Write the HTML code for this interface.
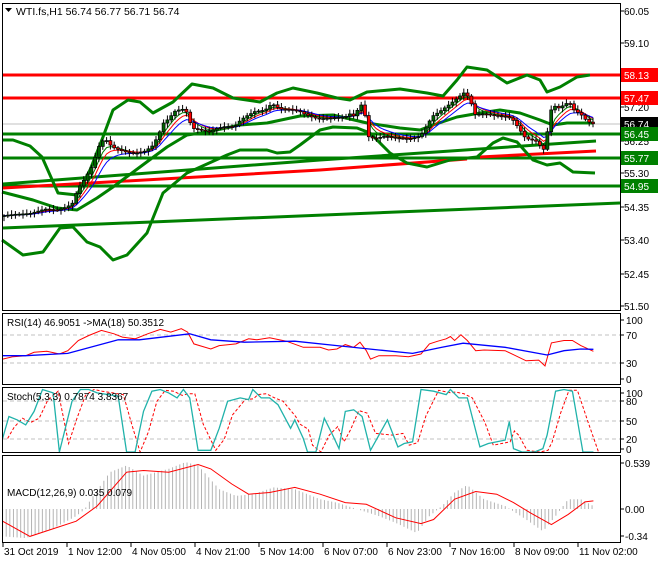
<!DOCTYPE html>
<html><head><meta charset="utf-8">
<style>
html,body{margin:0;padding:0;background:#fff;}
body{width:660px;height:560px;overflow:hidden;font-family:"Liberation Sans",sans-serif;}
svg text{font-family:"Liberation Sans",sans-serif;font-size:10px;fill:#000;}
</style></head><body>
<svg id="s" width="660" height="560" viewBox="0 0 660 560" xmlns="http://www.w3.org/2000/svg">
<rect x="0" y="0" width="660" height="560" fill="#fff"/>
<g id="main"></g>
<g id="ind"></g>
<g fill="none" stroke="#000" stroke-width="1">
<rect x="2.5" y="3.5" width="618" height="307"/>
<rect x="2.5" y="313.5" width="618" height="71"/>
<rect x="2.5" y="387.5" width="618" height="65"/>
<rect x="2.5" y="455.5" width="618" height="87"/>
</g>
<polygon points="5,8 12,8 8.5,12" fill="#000"/>
<text x="16" y="15" style="font-size:10.5px">WTI.fs,H1  56.74 56.77 56.71 56.74</text>
<text x="7" y="326">RSI(14) 46.9051  -&gt;MA(18) 50.3512</text>
<text x="7" y="400">Stoch(5,3,3) 0.7874 3.8367</text>
<text x="7" y="496">MACD(12,26,9) 0.035 0.079</text>
<g id="axis"></g>
</svg>
<script>
(function(){
var NS="http://www.w3.org/2000/svg";
function el(p,t,a,txt){var e=document.createElementNS(NS,t);for(var k in a)e.setAttribute(k,a[k]);if(txt!=null)e.textContent=txt;document.getElementById(p).appendChild(e);return e;}
function pl(p,pts,col,w,extra){var a={points:pts.map(function(q){return q[0]+","+q[1]}).join(" "),fill:"none",stroke:col,"stroke-width":w};for(var k in extra)a[k]=extra[k];return el(p,"polyline",a);}
var ax=[["60.05",11],["59.10",43],["57.20",107],["56.25",141],["55.30",173],["54.35",207],["53.40",240],["52.45",274],["51.50",306]];
ax.forEach(function(a){el("axis","line",{x1:620,y1:a[1],x2:624,y2:a[1],stroke:"#000"});el("axis","text",{x:624,y:a[1]+4},a[0]);});
var boxes=[["58.13",75,"#ff0000","#fff"],["57.47",98,"#ff0000","#fff"],["56.74",124,"#000","#fff"],["56.45",134,"#008000","#fff"],["55.77",158,"#008000","#fff"],["54.95",186,"#008000","#fff"]];
pl("main",[[3,124],[620,124]],"#c0c0c0",1);
pl("main",[[3,75],[620,75]],"#ff0000",3);
pl("main",[[3,98],[620,98]],"#ff0000",3);
pl("main",[[3,134],[620,134]],"#008000",3);
pl("main",[[3,158],[620,158]],"#008000",3);
pl("main",[[3,186],[620,186]],"#008000",3);
pl("main",[[3,228],[620,203]],"#008000",3);
pl("main",[[3,184],[320,160],[596,141]],"#008000",3);
pl("main",[[3,188],[320,170],[467,159]],"#ff0000",3);
pl("main",[[480,157],[596,151]],"#ff0000",3);
pl("main",[[2,140],[13,140],[30,146],[42,157],[50,175],[58,193],[77,195],[90,170],[103,137],[113,110],[128,100],[140,102],[153,113],[173,102],[192,84],[213,88],[233,98],[260,102],[277,93],[293,88],[317,93],[337,98],[350,100],[367,92],[400,89],[427,93],[443,96],[457,80],[467,67],[487,70],[507,83],[527,75],[540,80],[547,92],[560,87],[577,77],[590,75]],"#008000",3,{"stroke-linejoin":"round"});
pl("main",[[2,192],[33,200],[57,208],[77,210],[97,198],[113,187],[140,167],[167,147],[187,135],[207,132],[240,125],[267,123],[300,116],[333,115],[367,123],[400,128],[420,130],[433,125],[457,117],[480,113],[500,110],[520,113],[540,120],[553,125],[567,123],[593,123]],"#008000",3,{"stroke-linejoin":"round"});
pl("main",[[2,240],[23,255],[43,252],[60,228],[73,227],[87,242],[100,247],[113,260],[127,255],[147,233],[163,193],[187,173],[227,155],[240,150],[267,150],[277,153],[290,152],[300,145],[320,130],[333,127],[357,128],[370,133],[390,153],[407,163],[427,167],[450,160],[477,157],[493,143],[503,138],[517,142],[533,160],[547,165],[560,163],[573,172],[595,173]],"#008000",3,{"stroke-linejoin":"round"});
var kp=[[3,215],[15,213],[30,212],[45,208],[57,210],[65,208],[72,205],[78,190],[85,180],[92,168],[100,145],[105,140],[112,148],[118,150],[125,152],[135,153],[145,150],[152,145],[158,135],[163,122],[168,118],[175,110],[182,108],[187,112],[192,128],[200,130],[210,133],[215,130],[225,128],[235,128],[240,122],[245,118],[250,115],[255,112],[265,110],[272,103],[280,108],[290,108],[300,110],[305,113],[315,117],[320,118],[335,118],[345,118],[350,115],[355,118],[360,105],[364,110],[368,138],[375,140],[385,137],[395,138],[410,138],[420,135],[425,128],[432,115],[440,110],[450,103],[458,97],[465,92],[470,100],[475,115],[485,115],[495,117],[505,118],[512,120],[518,128],[525,138],[530,140],[535,140],[540,145],[545,150],[550,110],[555,105],[560,107],[565,102],[570,102],[575,110],[580,112],[585,118],[590,122],[595,124]];
function interp(x){for(var i=1;i<kp.length;i++){if(x<=kp[i][0]){var a=kp[i-1],b=kp[i];return a[1]+(b[1]-a[1])*(x-a[0])/(b[0]-a[0]);}}return kp[kp.length-1][1];}
var xs=[],cl=[];for(var x=4;x<=594;x+=3.8){xs.push(x);cl.push(interp(x)+Math.sin(x*1.7)*1.5);}
function ema(arr,n){var k=2/(n+1),o=[arr[0]];for(var i=1;i<arr.length;i++)o.push(o[i-1]+k*(arr[i]-o[i-1]));return o;}
var e1=ema(cl,4),e2=ema(cl,6),e3=ema(cl,9);
pl("main",xs.map(function(x,i){return[x,e1[i]]}),"#008000",1);
pl("main",xs.map(function(x,i){return[x,e2[i]]}),"#ff0000",1);
pl("main",xs.map(function(x,i){return[x,e3[i]]}),"#0000ff",1);
for(var i=0;i<xs.length;i++){var o=i?cl[i-1]:cl[0]+1,c=cl[i],cx=xs[i];var tp=Math.min(o,c),bt=Math.max(o,c);
var hw=1.5+Math.abs(Math.sin(i*2.3))*3,lw=1.5+Math.abs(Math.cos(i*1.9))*3;
el("main","line",{x1:cx,y1:tp-hw,x2:cx,y2:bt+lw,stroke:"#000","stroke-width":1});
var h=Math.max(1,bt-tp);el("main","rect",{x:cx-1.5,y:tp,width:3,height:h,fill:c<o?"#006400":"#ff0000",stroke:"#000","stroke-width":0.7});}
boxes.forEach(function(b){el("axis","rect",{x:621,y:b[1]-7,width:37,height:14,fill:b[2]});el("axis","text",{x:624,y:b[1]+4,style:"fill:"+b[3]},b[0]);});
function cv(a){return a.map(function(p){return[(p[0]*0.4205+0.5).toFixed(1),(300+p[1]*0.3377).toFixed(1)]});}
pl("ind",[[3,335],[620,335]],"#c0c0c0",1,{"stroke-dasharray":"4,3"});
pl("ind",[[3,363],[620,363]],"#c0c0c0",1,{"stroke-dasharray":"4,3"});
pl("ind",cv([[5,175],[30,168],[60,165],[80,155],[110,152],[140,160],[160,150],[185,120],[210,105],[240,90],[270,100],[290,110],[320,115],[350,100],[380,87],[405,95],[430,85],[445,95],[460,130],[500,145],[520,135],[560,130],[590,115],[610,118],[640,112],[680,122],[720,140],[760,140],[780,148],[800,145],[820,132],[840,140],[855,125],[870,150],[880,175],[900,165],[940,165],[970,168],[1000,160],[1020,130],[1040,122],[1060,115],[1070,108],[1080,120],[1095,103],[1110,120],[1130,150],[1150,148],[1200,150],[1220,162],[1250,180],[1280,178],[1295,195],[1310,127],[1340,120],[1360,120],[1380,135],[1410,152]]),"#ff0000",1);
pl("ind",cv([[5,165],[60,165],[160,158],[280,118],[330,118],[450,100],[500,118],[580,125],[700,122],[800,135],[900,148],[980,158],[1050,140],[1100,128],[1200,140],[1300,163],[1340,150],[1380,145],[1410,146]]),"#0000ff",1.3);
[["100",320],["70",335],["30",363],["0",379]].forEach(function(a){el("ind","line",{x1:620,y1:a[1],x2:624,y2:a[1],stroke:"#000"});el("ind","text",{x:626,y:a[1]+4},a[0]);});
[401,421,439].forEach(function(y){pl("ind",[[3,y],[620,y]],"#c0c0c0",1,{"stroke-dasharray":"4,3"});});
var st=[[5,410],[20,345],[40,355],[60,370],[80,330],[100,265],[125,275],[140,450],[150,400],[170,300],[190,265],[210,265],[230,275],[280,285],[300,450],[320,450],[340,330],[360,270],[380,265],[400,275],[420,290],[435,265],[450,290],[470,445],[500,445],[520,380],[540,300],[570,290],[590,295],[600,265],[620,290],[640,290],[660,310],[690,380],[700,355],[720,410],[730,450],[750,450],[770,350],[790,400],[805,440],[820,330],[840,325],[860,345],[880,445],[920,355],[945,435],[960,425],[980,420],[1000,265],[1030,270],[1060,280],[1070,265],[1090,290],[1110,290],[1140,435],[1160,425],[1200,415],[1210,360],[1220,440],[1240,450],[1270,450],[1290,440],[1300,400],[1320,270],[1340,265],[1360,270],[1385,450],[1410,450]];
var sg=[];for(var j=0;j<st.length;j++){var yy=(st[j][1]+(j?st[j-1][1]:st[j][1]))/2;sg.push([st[j][0]+12,yy]);}
pl("ind",cv(sg),"#ff0000",1,{"stroke-dasharray":"3,2"});
pl("ind",cv(st),"#20b2aa",1.3);
[["100",393],["80",401],["50",421],["20",439],["0",449]].forEach(function(a){el("ind","line",{x1:620,y1:a[1],x2:624,y2:a[1],stroke:"#000"});el("ind","text",{x:626,y:a[1]+4},a[0]);});
var hk=[[5,700],[60,705],[120,680],[180,640],[200,620],[215,590],[260,510],[300,490],[340,520],[400,500],[440,480],[470,490],[520,560],[560,580],[600,575],[650,555],[700,560],[760,590],[800,600],[850,620],[900,640],[940,660],[990,690],[1020,640],[1050,610],[1080,570],[1110,548],[1150,590],[1200,610],[1250,650],[1290,685],[1320,640],[1350,590],[1380,590],[1410,610]];
function hi(x){for(var i=1;i<hk.length;i++){if(x<=hk[i][0]){var a=hk[i-1],b=hk[i];return a[1]+(b[1]-a[1])*(x-a[0])/(b[0]-a[0]);}}return 610;}
for(var zx=5;zx<=1410;zx+=8.6){var px=(zx*0.4205+0.5),y1=300+hi(zx)*0.3377;el("ind","line",{x1:px,y1:509,x2:px,y2:y1,stroke:"#b4b4b4","stroke-width":1});}
pl("ind",cv([[5,655],[70,700],[180,655],[230,610],[300,510],[340,505],[400,510],[470,487],[500,500],[550,545],[590,575],[640,570],[700,555],[760,575],[820,600],[870,605],[940,645],[1000,662],[1030,650],[1080,590],[1130,567],[1180,575],[1220,600],[1260,630],[1310,665],[1350,635],[1390,598],[1410,595]]),"#ff0000",1);
[["0.539",463],["0.00",509],["-0.34",536]].forEach(function(a){el("ind","line",{x1:620,y1:a[1],x2:624,y2:a[1],stroke:"#000"});el("ind","text",{x:625,y:a[1]+4},a[0]);});
[["31 Oct 2019",3],["1 Nov 12:00",67],["4 Nov 05:00",131],["4 Nov 21:00",195],["5 Nov 14:00",259],["6 Nov 07:00",323],["6 Nov 23:00",387],["7 Nov 16:00",450],["8 Nov 09:00",514],["11 Nov 02:00",578]].forEach(function(a){el("axis","line",{x1:a[1],y1:543,x2:a[1],y2:547,stroke:"#000"});el("axis","text",{x:a[1]+1,y:555},a[0]);});
})();
</script>
</body></html>
